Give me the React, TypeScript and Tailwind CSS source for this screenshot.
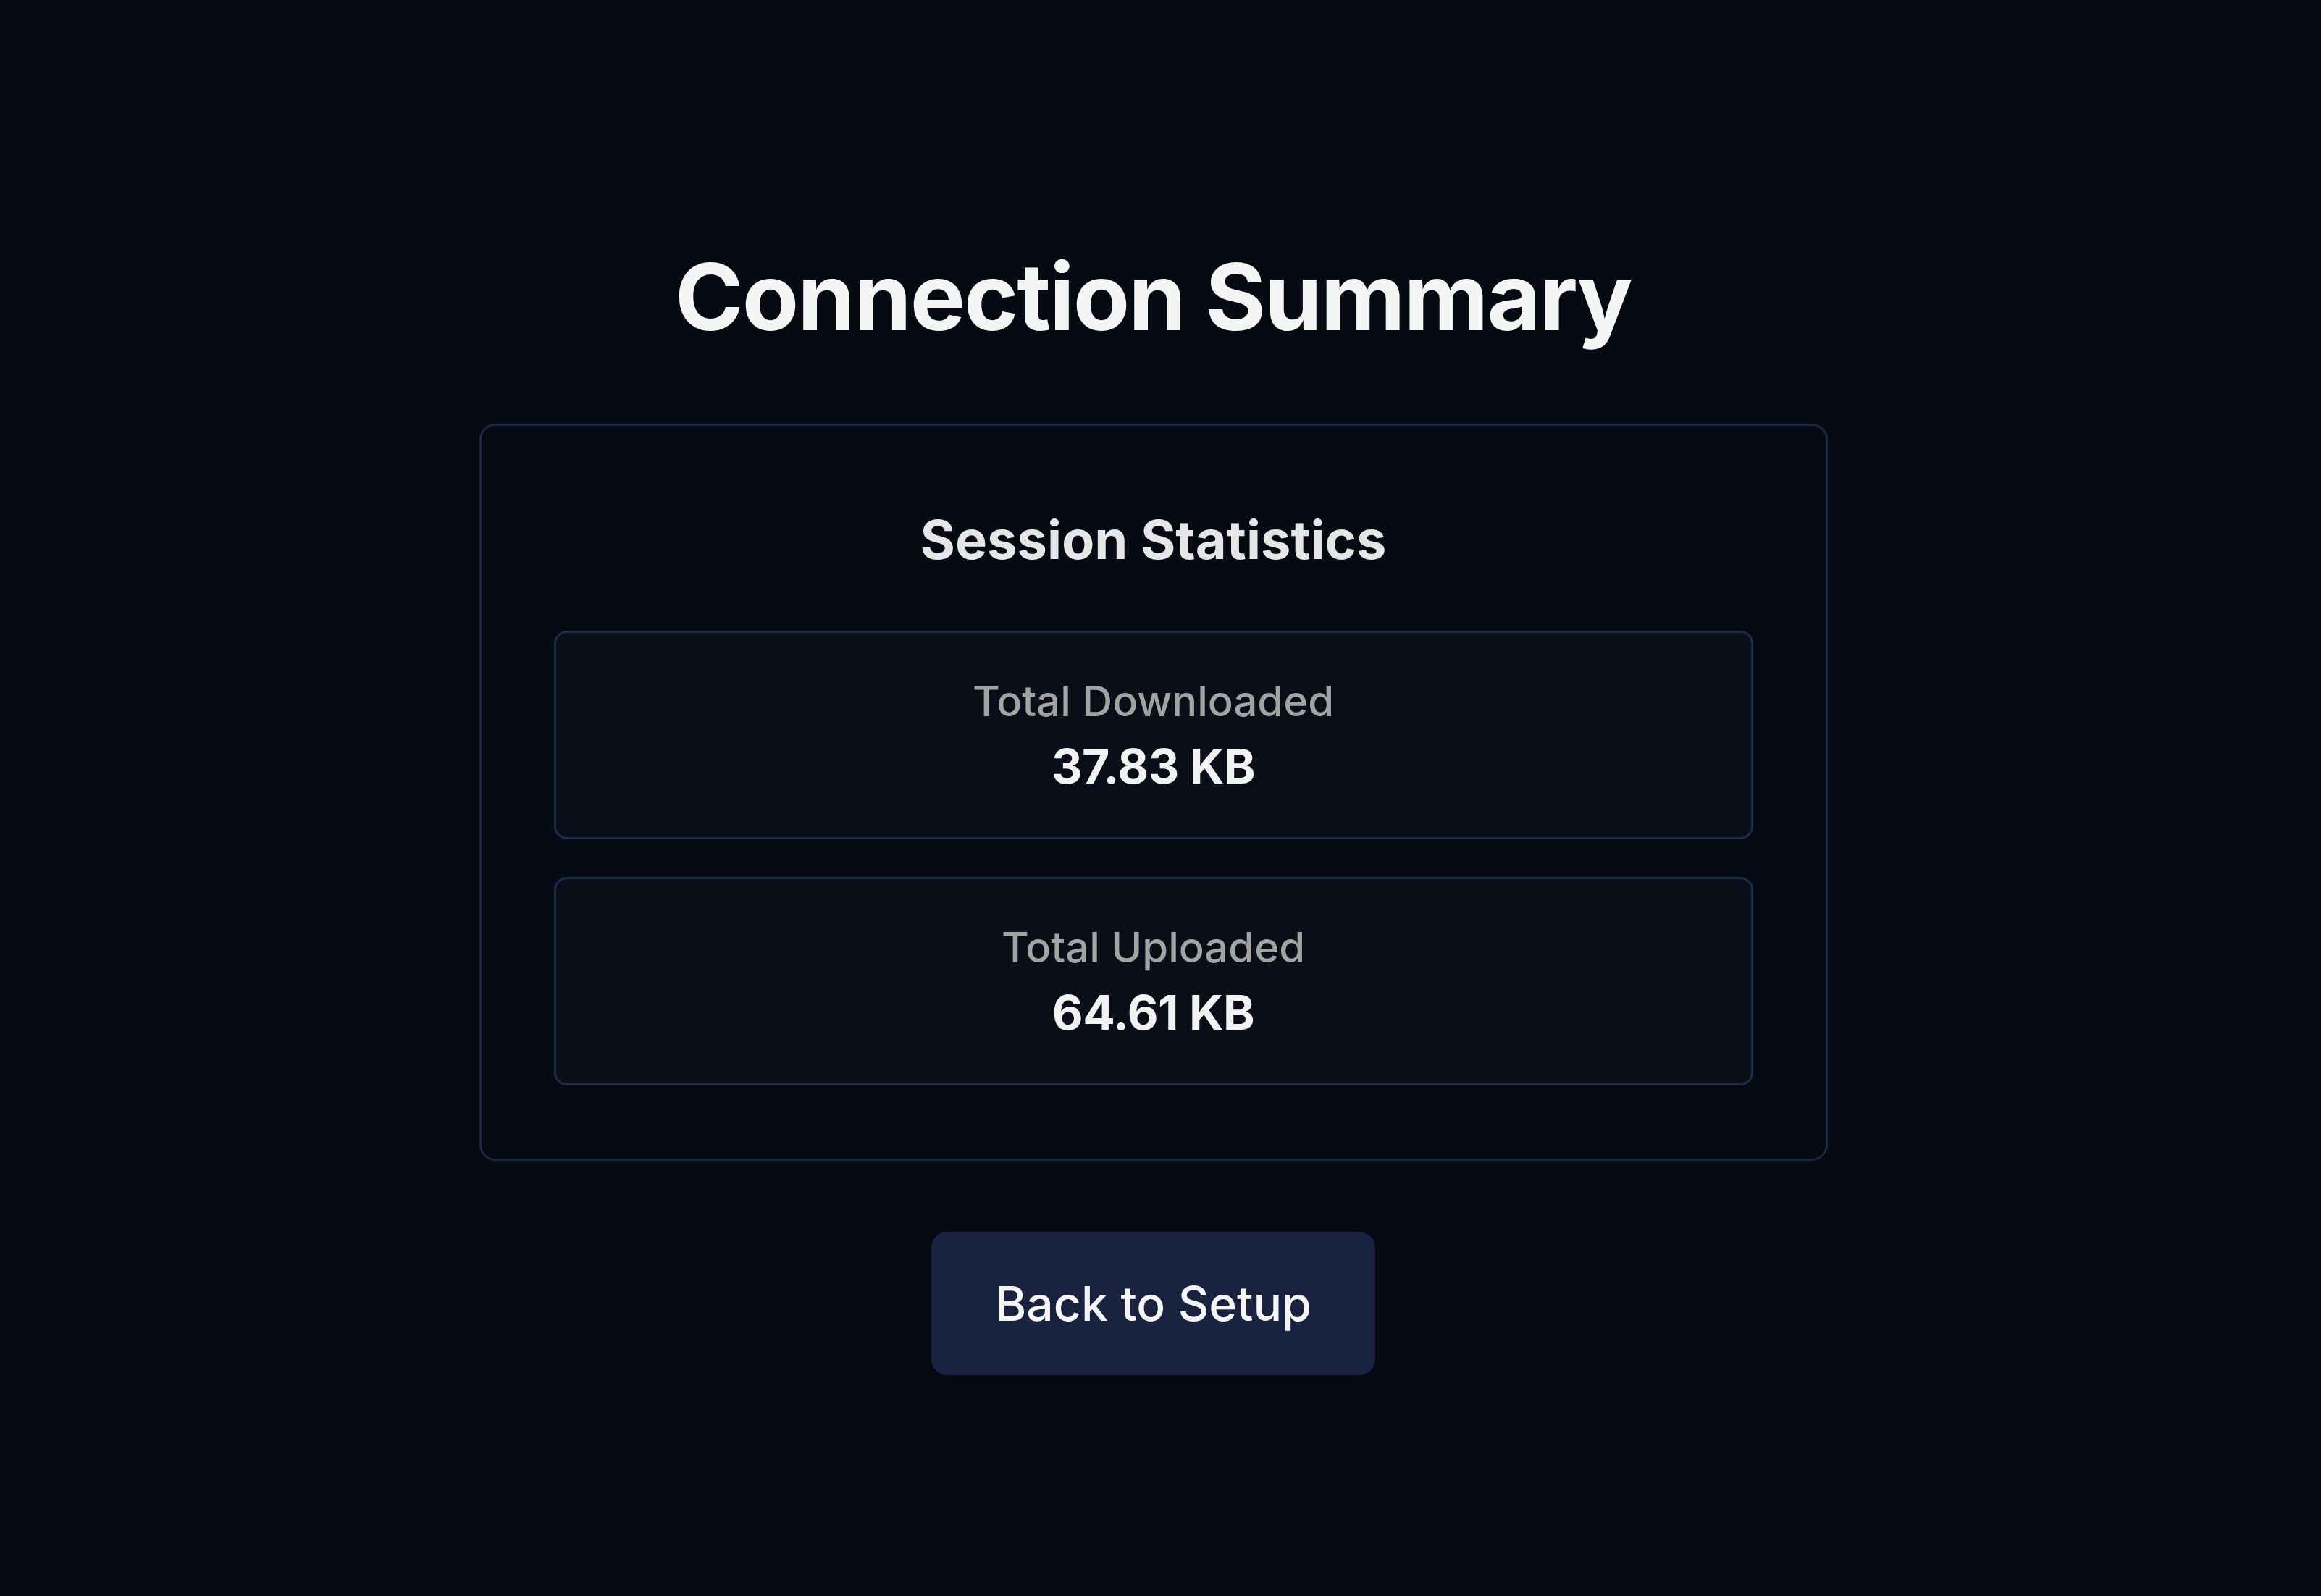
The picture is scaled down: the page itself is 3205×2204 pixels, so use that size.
import React from 'react';

const stats = [
  { label: 'Total Downloaded', value: '37.83 KB' },
  { label: 'Total Uploaded', value: '64.61 KB' },
];

export default function App() {
  return (
    <div
      className="min-h-screen bg-[#060a12] pr-5 pt-[346px] pb-[200px] flex flex-col items-center text-[#f5f5f5]"
      style={{ fontFamily: 'Inter, "Noto Sans", sans-serif' }}
    >
      <h1 className="text-[128px] leading-none font-bold tracking-[-2px]">Connection Summary</h1>

      <div className="mt-[111px] w-[1862px] rounded-[22px] border-[3px] border-[#1a2745] bg-[#060a13] px-[100px] pt-[103px] pb-[101px]">
        <h2 className="text-center text-[74px] leading-[108px] font-bold text-[#e6e6e6]">Session Statistics</h2>

        <div className="mt-[72px] flex flex-col gap-[52px]">
          {stats.map((s) => (
            <div
              key={s.label}
              className="h-[288px] rounded-[18px] border-[3px] border-[#1c2b4f] bg-[#0a0e19] flex flex-col items-center justify-center"
            >
              <div className="text-[58px] leading-[64px] font-medium text-[#a3a3a3]">{s.label}</div>
              <div className="mt-[22px] text-[66px] leading-[72px] font-bold tracking-[-0.5px] text-[#f2f2f2]">{s.value}</div>
            </div>
          ))}
        </div>
      </div>

      <button className="mt-[98px] h-[198px] px-[88px] rounded-[22px] bg-[#19223f] text-[66px] font-medium text-[#f5f5f5]">
        Back to Setup
      </button>
    </div>
  );
}
